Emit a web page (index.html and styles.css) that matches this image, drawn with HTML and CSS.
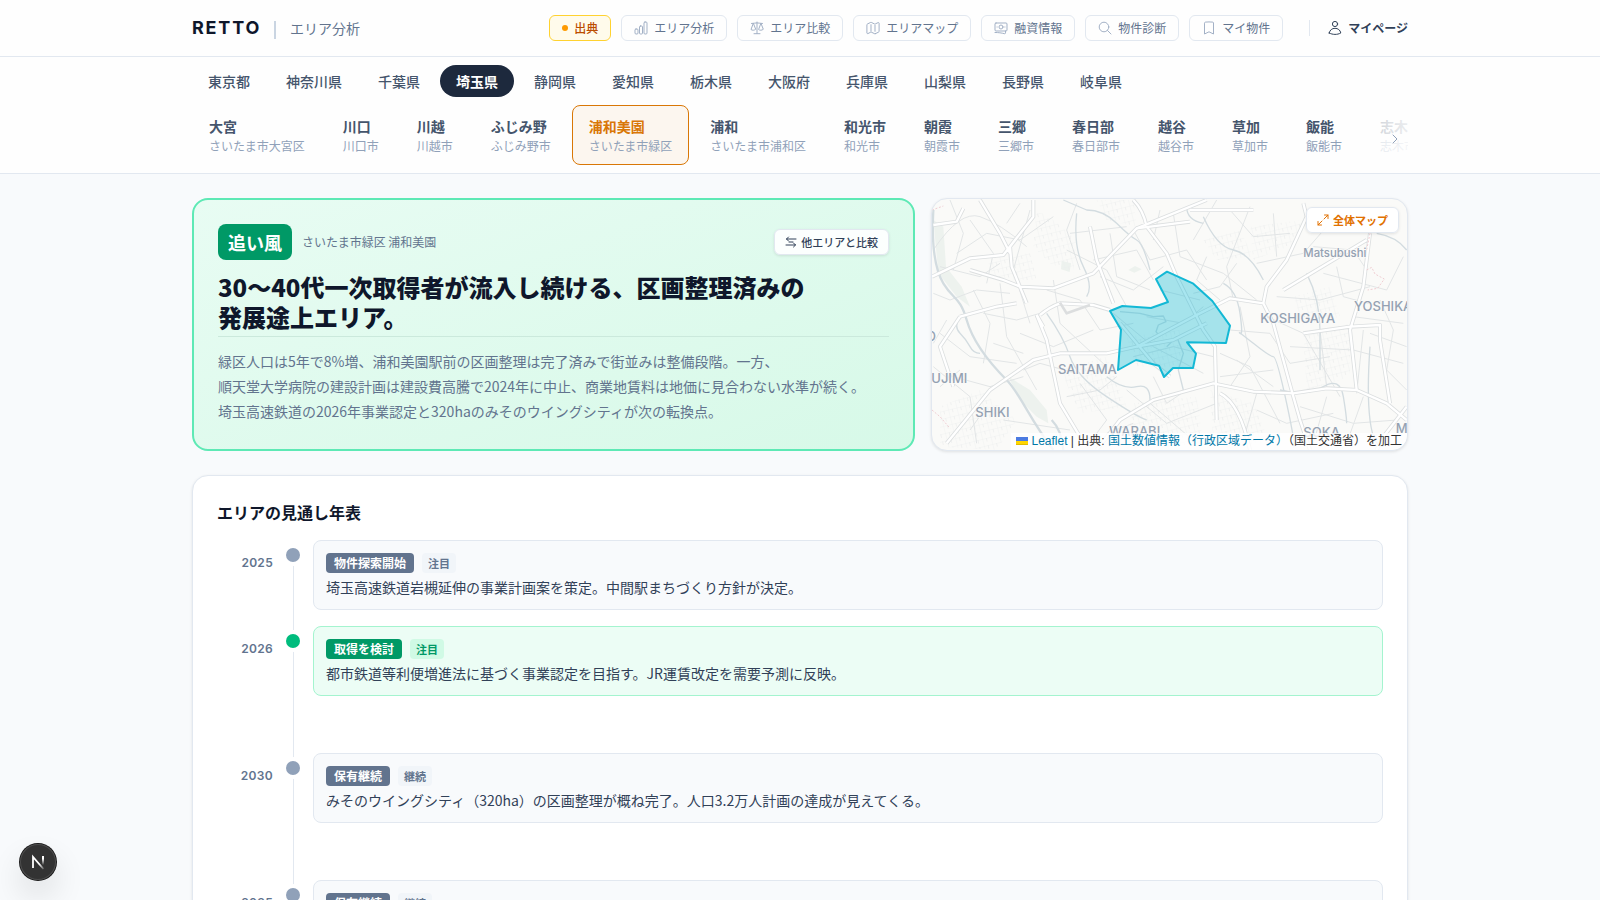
FILE: index.html
```html
<!DOCTYPE html>
<html lang="ja">
<head>
    <meta charset="UTF-8">
    <meta name="viewport" content="width=device-width, initial-scale=1.0">
    <title>RETTO エリア分析</title>
    <link rel="stylesheet" href="styles.css">
</head>
<body>
    <header class="site-header">
        <div class="container header-inner">
            <a href="#" class="logo">RETTO</a>
            <span class="logo-divider"></span>
            <span class="page-name">エリア分析</span>

            <nav class="main-nav">
                <button type="button" class="chip chip-source"><span class="source-dot"></span>出典</button>
                <a href="#" class="chip">
                    <svg class="icon" viewBox="0 0 14 14"><rect x="1" y="8" width="3" height="5" rx="1"/><rect x="5.500" y="5" width="3" height="8" rx="1"/><rect x="10" y="1" width="3" height="12" rx="1"/></svg>
                    エリア分析
                </a>
                <a href="#" class="chip">
                    <svg class="icon" viewBox="0 0 14 14"><path d="M7 1v11.500M4 12.700h6M1.500 2.500c2 0 3.500-.6 5.500-.6s3.500.6 5.500.6M3.200 2.600 1 8.500c1.300 1 3.100 1 4.400 0zM10.800 2.600 8.600 8.500c1.300 1 3.100 1 4.400 0z"/></svg>
                    エリア比較
                </a>
                <a href="#" class="chip">
                    <svg class="icon" viewBox="0 0 14 14"><path d="M5 3.700v6.500M9 4.300v6M9.300 12.700l3.300-1.600c.3-.2.500-.4.500-.7V2.200c0-.5-.6-.8-1-.6L9.200 3c-.2.100-.4.100-.6 0L5.300 1.400c-.2-.1-.4-.1-.6 0L1.400 3c-.3.200-.5.400-.5.700V12c0 .5.600.8 1 .6l2.800-1.400c.2-.1.400-.1.600 0l3.400 1.500c.2.100.4.100.6 0z"/></svg>
                    エリアマップ
                </a>
                <a href="#" class="chip">
                    <svg class="icon" viewBox="0 0 14 14"><rect x="1" y="2" width="12" height="8" rx="1"/><circle cx="7" cy="6" r="2"/><path d="M1 11.500c3.500 0 6.500.4 9.500 1.200.6.100 1-.2 1-.8V10M3 6h.2M10.800 6h.2"/></svg>
                    融資情報
                </a>
                <a href="#" class="chip">
                    <svg class="icon" viewBox="0 0 14 14"><circle cx="6" cy="6" r="4.800"/><path d="m9.500 9.500 3.500 3.500"/></svg>
                    物件診断
                </a>
                <a href="#" class="chip">
                    <svg class="icon" viewBox="0 0 14 14"><path d="M11.500 2.200V13L7 10.800 2.500 13V2.200c0-.6.400-1 1-1.100a32 32 0 0 1 7 0c.6.100 1 .5 1 1.100z"/></svg>
                    マイ物件
                </a>
            </nav>

            <a href="#" class="my-page">
                <svg class="icon" viewBox="0 0 14 14"><circle cx="7" cy="3" r="2.600"/><path d="M1.200 12c.6-3 2.900-4.700 5.800-4.700s5.200 1.700 5.800 4.700c-3.600 1.900-8 1.900-11.600 0z"/></svg>
                マイページ
            </a>
        </div>
    </header>

    <!-- Prefecture and area pickers -->
    <section class="area-nav">
        <div class="container">
            <div class="pref-row">
                <button type="button" class="pref">東京都</button>
                <button type="button" class="pref">神奈川県</button>
                <button type="button" class="pref">千葉県</button>
                <button type="button" class="pref pref-active">埼玉県</button>
                <button type="button" class="pref">静岡県</button>
                <button type="button" class="pref">愛知県</button>
                <button type="button" class="pref">栃木県</button>
                <button type="button" class="pref">大阪府</button>
                <button type="button" class="pref">兵庫県</button>
                <button type="button" class="pref">山梨県</button>
                <button type="button" class="pref">長野県</button>
                <button type="button" class="pref">岐阜県</button>
            </div>
            <div class="area-scroll">
                <div class="area-row">
                    <a href="#" class="area"><b>大宮</b><span>さいたま市大宮区</span></a>
                    <a href="#" class="area"><b>川口</b><span>川口市</span></a>
                    <a href="#" class="area"><b>川越</b><span>川越市</span></a>
                    <a href="#" class="area"><b>ふじみ野</b><span>ふじみ野市</span></a>
                    <a href="#" class="area area-active"><b>浦和美園</b><span>さいたま市緑区</span></a>
                    <a href="#" class="area"><b>浦和</b><span>さいたま市浦和区</span></a>
                    <a href="#" class="area"><b>和光市</b><span>和光市</span></a>
                    <a href="#" class="area"><b>朝霞</b><span>朝霞市</span></a>
                    <a href="#" class="area"><b>三郷</b><span>三郷市</span></a>
                    <a href="#" class="area"><b>春日部</b><span>春日部市</span></a>
                    <a href="#" class="area"><b>越谷</b><span>越谷市</span></a>
                    <a href="#" class="area"><b>草加</b><span>草加市</span></a>
                    <a href="#" class="area"><b>飯能</b><span>飯能市</span></a>
                    <a href="#" class="area"><b>志木</b><span>志木市</span></a>
                </div>
                <button type="button" class="scroll-next" aria-label="次へ">
                    <svg class="icon" viewBox="0 0 14 14"><path d="m5 3 4 4-4 4"/></svg>
                </button>
            </div>
        </div>
    </section>

    <main class="container main">
        <div class="overview">
            <!-- Summary -->
            <section class="summary">
                <div class="summary-top">
                    <span class="verdict">追い風</span>
                    <span class="summary-place">さいたま市緑区 浦和美園</span>
                    <button type="button" class="small-btn compare-btn">
                        <svg class="icon" viewBox="0 0 12 12"><path d="M11 3H1.500M3.500 1l-2 2 2 2M1 9h9.500M8.500 7l2 2-2 2M4 6h4"/></svg>
                        他エリアと比較
                    </button>
                </div>
                <h1>30〜40代一次取得者が流入し続ける、区画整理済みの<br>発展途上エリア。</h1>
                <p class="summary-text">緑区人口は5年で8%増、浦和美園駅前の区画整理は完了済みで街並みは整備段階。一方、<br>順天堂大学病院の建設計画は建設費高騰で2024年に中止、商業地賃料は地価に見合わない水準が続く。<br>埼玉高速鉄道の2026年事業認定と320haのみそのウイングシティが次の転換点。</p>
            </section>

            <!-- Map -->
            <section class="map">
                <svg class="map-canvas" viewBox="36 27 1425 753" preserveAspectRatio="xMidYMid slice">
                    <defs>
                        <pattern id="blocks" width="26" height="22" patternUnits="userSpaceOnUse" patternTransform="rotate(-14)">
                            <path d="M0 0H26M0 0V22M13 0V11" class="block-line"/>
                        </pattern>
                    </defs>

                    <path class="park" d="M40 90 70 110 78 230 125 290 150 350 110 320 55 250zM265 560 330 600 380 660 385 700 350 680 300 630zM425 212l28 8-4 26-26-8zM625 240l20-12 20 10-22 10z"/>

                    <g fill="url(#blocks)">
                        <path d="M350 60 400 90 470 150 460 250 390 220 340 170zM850 150 960 120 1000 200 890 210zM990 110 1150 90 1130 160 1000 210zM1150 430 1290 400 1290 560 1160 600zM640 640 830 620 850 760 620 780zM1120 320 1230 290 1260 380 1150 410z"/>
                        <path d="M60 650 180 600 290 690 230 780 60 770zM420 540 560 500 620 650 480 670zM620 440 780 420 790 530 650 530zM870 600 1000 640 1050 760 880 770zM530 30 640 30 650 110 560 90zM200 200 330 190 350 270 220 270z"/>
                    </g>

                    <!-- local streets -->
                    <g class="street">
                        <path d="M40 180Q120 60 180 80T320 170M90 30 130 130 100 240M160 300 210 400 190 520M60 430 150 500 290 520M40 530 150 620 170 760M240 280 260 440 350 600M330 60 280 240 330 400M400 270 420 400 560 530M450 130 620 110M440 180 560 240 620 350"/>
                        <path d="M520 210 650 180 700 270M640 120 690 210 800 180 860 270M760 70 780 200 910 250 1010 330M890 30 820 150M990 50 920 230 940 330M1010 220 1150 190 1220 110M1210 250 1400 300 1450 200M1070 320 1200 330 1350 290M1040 380 1150 430 1260 620"/>
                        <path d="M580 370 700 470 850 550M620 600 740 700 890 640M480 580 560 690 500 770M690 640 830 760M900 490 990 530 1080 700M960 350 990 500 930 590M1110 470 1300 480 1450 520M1140 650 1300 700 1430 690M1010 610 970 750M1220 620 1180 760M250 690 450 720M1300 380 1450 400M1350 430 1460 470"/>
                        <path d="M110 190 200 130 300 150 400 80M40 310 90 330 170 300 270 310M190 370 290 390 360 370M100 560 210 590 310 560M260 100 300 40M470 40 440 120 480 240M570 130 590 260 690 300M820 310 900 290 950 220M1060 70 1070 200M1200 420 1220 590M1330 420 1310 610M700 560 740 640 800 600"/>
                        <path d="M60 230 180 260 240 220M150 90 220 190 200 280M380 300 480 330 540 420 640 400M300 430 400 470 520 420M310 540 360 520 470 550M440 620 540 600 590 560M540 260 640 300 730 230M720 60 700 150M860 200 830 270 900 330M930 60 1000 140 1110 130M1180 170 1300 180 1340 240M1250 230 1270 320 1380 350M930 420 1050 430 1110 520 1230 500M950 510 1060 590M900 560 1060 540M1380 330 1420 420 1400 540 1460 600M1010 660 1100 700 1240 670M1330 620 1280 760M560 730 640 700M200 650 150 720M80 390 40 460M220 460 310 490M640 500 760 470 880 500M680 380 790 400 850 350M720 300 840 330M60 590 120 540"/>
                    </g>

                    <!-- rivers -->
                    <g class="river">
                        <path class="river-wide" d="M40 60C35 150 40 230 70 280S120 320 140 390 220 530 260 570 330 690 400 780M395 690Q425 720 430 780"/>
                        <path d="M470 70Q460 170 490 230T500 320M380 370Q430 440 450 500T560 620 680 690M430 30 500 60Q550 60 590 100T650 150 690 240M910 280Q950 300 960 370T960 430 1000 460 1060 500 1100 640 1120 770M850 80Q890 170 940 180T1030 270M800 50Q800 90 850 100M1160 250Q1200 330 1200 420T1200 540M1350 470Q1340 610 1350 690T1390 770"/>
                        <path d="M600 365 660 370 700 380 730 378 738 395 715 405 708 425 720 440M740 470 770 440 790 490 775 540 790 600M1370 130Q1430 140 1460 180M120 380q-20 30 0 50t30 40 30 20M1080 600Q1160 620 1210 590T1270 620 1280 700M560 560Q610 600 650 590T690 630"/>
                    </g>

                    <!-- main roads: casing, then the white surface -->
                    <g class="road-casing">
                        <path id="roads-a" d="M640 30Q670 60 680 110L740 190 770 260 850 420 885 470 890 690M340 30V80L270 170 275 230 320 340M36 260 150 205 250 195 340 80M150 240 250 270 300 290 400 295 520 250 650 115 860 30M180 30 240 130 270 190M120 380 230 350 290 340M350 375 380 450 420 640 480 740"/>
                        <path id="roads-b" d="M530 780 600 690 700 630 880 580 1000 605 1120 610 1220 595 1310 600 1400 640 1460 690M360 375Q390 350 420 340L520 345 570 360M350 375 370 410M1150 40 1160 80 1100 210 1040 290 1030 340 1060 400 1120 620 1140 690 1170 780M1030 340 930 325 820 380 650 470 560 490 420 490 340 510 210 600 80 760"/>
                        <path id="roads-c" d="M650 115 810 95M1150 430 1290 410 1380 405 1380 450 1410 640M1350 130 1330 290 1290 420 1310 600M1090 300 1190 240 1340 150M1460 650 1390 740 1370 780M900 610Q960 640 990 780M120 380 60 470 100 590M40 105 110 95 130 55M510 110 530 210 580 340M810 60 1000 60M600 400 700 520 750 560M650 470 760 450 860 400"/>
                    </g>
                    <g class="road">
                        <use href="#roads-a"/>
                        <use href="#roads-b"/>
                        <use href="#roads-c"/>
                    </g>
                    <path class="rail" d="M420 338 440 370 510 345"/>
                    <path class="boundary" d="M36 60 70 48M36 660 60 680 90 715M1340 240l15-8 10 20 28 15-20 28-30 5M1350 130l-10 50"/>

                    <path class="ward" d="M741 245 820 281 877 333 930 407 918 459 801 457 828 491 819 534 759 534 732 561 717 527 648 510 594 540 603 419 570 363 607 348 693 354 744 336 708 267z"/>

                    <g class="place">
                        <text class="town" x="1150" y="202">Matsubushi</text>
                        <text x="1302" y="364">YOSHIKAWA</text>
                        <text x="1021" y="398">KOSHIGAYA</text>
                        <text x="414" y="552">SAITAMA</text>
                        <text x="142" y="578" text-anchor="end">FUJIMI</text>
                        <text x="166" y="682">SHIKI</text>
                        <text x="567" y="738">WARABI</text>
                        <text x="1150" y="740">SOKA</text>
                        <text x="1427" y="728">MISATO</text>
                        <text x="48" y="454" text-anchor="end">O</text>
                    </g>
                </svg>
                <a href="#" class="small-btn map-btn">
                    <svg class="icon" viewBox="0 0 12 12"><path d="M7.500 1H11v3.500M11 1 7 5M4.500 11H1V7.500M1 11l4-4"/></svg>
                    全体マップ
                </a>
                <div class="map-credit">
                    <svg class="flag" viewBox="0 0 12 8"><path fill="#4c7be1" d="M0 0h12v4H0z"/><path fill="#ffd500" d="M0 4h12v3H0z"/><path fill="#e0bc00" d="M0 7h12v1H0z"/></svg>
                    <a href="#">Leaflet</a> | 出典: <a href="#">国土数値情報（行政区域データ）</a>（国土交通省）を加工
                </div>
            </section>
        </div>

        <!-- Timeline -->
        <section class="outlook">
            <h2>エリアの見通し年表</h2>
            <ol class="timeline">
                <li class="entry">
                    <time class="year">2025</time>
                    <span class="rail-dot"></span>
                    <div class="entry-card">
                        <div class="entry-tags"><span class="action">物件探索開始</span><span class="tag">注目</span></div>
                        <p>埼玉高速鉄道岩槻延伸の事業計画案を策定。中間駅まちづくり方針が決定。</p>
                    </div>
                </li>
                <li class="entry entry-buy entry-long">
                    <time class="year">2026</time>
                    <span class="rail-dot"></span>
                    <div class="entry-card">
                        <div class="entry-tags"><span class="action">取得を検討</span><span class="tag">注目</span></div>
                        <p>都市鉄道等利便増進法に基づく事業認定を目指す。JR運賃改定を需要予測に反映。</p>
                    </div>
                </li>
                <li class="entry entry-long">
                    <time class="year">2030</time>
                    <span class="rail-dot"></span>
                    <div class="entry-card">
                        <div class="entry-tags"><span class="action">保有継続</span><span class="tag">継続</span></div>
                        <p>みそのウイングシティ（320ha）の区画整理が概ね完了。人口3.2万人計画の達成が見えてくる。</p>
                    </div>
                </li>
                <li class="entry">
                    <time class="year">2035</time>
                    <span class="rail-dot"></span>
                    <div class="entry-card">
                        <div class="entry-tags"><span class="action">保有継続</span><span class="tag">継続</span></div>
                    </div>
                </li>
            </ol>
        </section>
    </main>

    <button type="button" class="dev-badge" aria-label="Dev Tools">
        <svg viewBox="0 0 36 36">
            <defs>
                <linearGradient id="n-fade" x1="0" y1="0" x2="0" y2="1"><stop offset="0.300" stop-color="#fff"/><stop offset="1" stop-color="#fff" stop-opacity="0"/></linearGradient>
                <linearGradient id="n-diag" x1="0" y1="0" x2="1" y2="1"><stop offset="0.600" stop-color="#fff"/><stop offset="1" stop-color="#fff" stop-opacity="0.200"/></linearGradient>
            </defs>
            <path d="M13 24V13L23.500 25" fill="none" stroke="url(#n-diag)" stroke-width="1.800"/>
            <rect x="22" y="12" width="2" height="9" fill="url(#n-fade)"/>
        </svg>
    </button>
</body>
</html>
```
FILE: styles.css
```css
* {
    margin: 0;
    padding: 0;
    box-sizing: border-box;
}

body {
    font-family: "Noto Sans CJK JP", sans-serif;
    font-size: 14px;
    line-height: 20px;
    background-color: #f8fafc;
    color: #0f172b;
}

a {
    color: inherit;
    text-decoration: none;
}

button {
    font: inherit;
    color: inherit;
    background: none;
    border: none;
    cursor: pointer;
}

.container {
    max-width: 1280px;
    margin: 0 auto;
    padding: 0 32px;
}

.icon {
    width: 14px;
    height: 14px;
    flex-shrink: 0;
    fill: none;
    stroke: currentColor;
    stroke-linecap: round;
    stroke-linejoin: round;
}

/* Header */
.site-header {
    background-color: #fefefe;
    border-bottom: 1px solid #e2e8f0;
}

.header-inner {
    display: flex;
    align-items: center;
    height: 56px;
}

.logo {
    font-family: Inter, sans-serif;
    font-size: 18px;
    font-weight: 700;
    letter-spacing: 0.1em;
}

.logo-divider {
    width: 2px;
    height: 18px;
    margin: 4px 14px 0 13px;
    background-color: #cad5e2;
}

.page-name {
    color: #62748e;
}

.main-nav {
    display: flex;
    gap: 10px;
    margin-left: auto;
}

.chip {
    display: flex;
    align-items: center;
    gap: 6px;
    height: 26px;
    padding: 0 12px;
    border: 1px solid #e2e8f0;
    border-radius: 6px;
    font-size: 12px;
    color: #62748e;
    white-space: nowrap;
}

.chip .icon {
    color: #a3b1c6;
}

.chip-source {
    background-color: #fffbeb;
    border-color: #ffd230;
    color: #bb4d00;
    font-weight: 500;
}

.source-dot {
    width: 6px;
    height: 6px;
    border-radius: 50%;
    background-color: #fe9a00;
}

.my-page {
    display: flex;
    align-items: center;
    gap: 6px;
    margin-left: 26px;
    font-size: 12px;
    font-weight: 700;
    color: #314158;
    white-space: nowrap;
}

.my-page::before {
    content: "";
    width: 1px;
    height: 16px;
    margin-right: 12px;
    background-color: #e2e8f0;
}

/* Area picker */
.area-nav {
    padding: 8px 0;
    background-color: #fefefe;
    border-bottom: 1px solid #e2e8f0;
}

.pref-row {
    display: flex;
    gap: 4px;
    margin-bottom: 8px;
}

.pref {
    height: 32px;
    padding: 0 16px;
    border-radius: 16px;
    font-weight: 500;
    color: #45556c;
    white-space: nowrap;
}

.pref-active {
    background-color: #1d293d;
    color: #fff;
    font-weight: 700;
}

.area-scroll {
    position: relative;
    overflow: hidden;
}

.area-row {
    display: flex;
    gap: 4px;
}

.area {
    flex-shrink: 0;
    height: 60px;
    padding: 10px 16px;
    border: 1px solid transparent;
    border-radius: 8px;
}

.area b {
    display: block;
    font-weight: 700;
    color: #45556c;
}

.area span {
    display: block;
    margin-top: 2px;
    font-size: 12px;
    line-height: 16px;
    color: #90a1b9;
}

.area-active {
    background-color: #fcf6ef;
    border-color: #d97706;
}

.area-active b {
    color: #d97706;
}

.scroll-next {
    position: absolute;
    top: 0;
    right: 0;
    bottom: 0;
    display: flex;
    align-items: center;
    justify-content: flex-end;
    width: 44px;
    padding: 8px 6px 0 0;
    background: linear-gradient(to right, rgba(254, 254, 254, 0.7), rgba(254, 254, 254, 0.9));
    color: #90a1b9;
}

/* Overview */
.main {
    padding-top: 24px;
    padding-bottom: 24px;
}

.overview {
    display: grid;
    grid-template-columns: minmax(0, 1fr) 477px;
    gap: 16px;
    min-height: 253px;
    margin-bottom: 24px;
}

.summary {
    padding: 24px;
    border: 2px solid #5ee9b5;
    border-radius: 16px;
    background: linear-gradient(160deg, #e8fcf3, #d7f9e8);
}

.summary-top {
    display: flex;
    align-items: center;
    gap: 10px;
    margin-bottom: 12px;
}

.verdict {
    padding: 0 10px;
    border-radius: 8px;
    background-color: #009966;
    color: #fff;
    font-size: 18px;
    font-weight: 700;
    line-height: 36px;
}

.summary-place {
    font-size: 12px;
    color: #62748e;
}

.small-btn {
    display: flex;
    align-items: center;
    gap: 4px;
    height: 26px;
    padding: 0 10px;
    border: 1px solid #e2e8f0;
    border-radius: 6px;
    background-color: rgba(255, 255, 255, 0.9);
    box-shadow: 0 1px 3px rgba(0, 0, 0, 0.1);
    font-size: 11px;
    white-space: nowrap;
}

.small-btn .icon {
    width: 12px;
    height: 12px;
}

.compare-btn {
    margin-left: auto;
    color: #314158;
    font-weight: 500;
}

h1 {
    padding-bottom: 4px;
    border-bottom: 1px solid #cbe9dc;
    font-size: 24px;
    font-weight: 800;
    line-height: 30px;
}

.summary-text {
    padding-top: 12px;
    line-height: 25px;
    color: #62748e;
}

/* Map */
.map {
    position: relative;
    border: 1px solid #e2e8f0;
    border-radius: 16px;
    background-color: #fafaf8;
    box-shadow: 0 1px 3px rgba(0, 0, 0, 0.1);
    overflow: hidden;
}

.map-canvas {
    position: absolute;
    width: 100%;
    height: 100%;
}

.map-canvas path {
    fill: none;
    stroke-linejoin: round;
}

.map-canvas .park {
    fill: #edf2ee;
}

.map-canvas g[fill] path {
    fill: url(#blocks);
}

.map-canvas .block-line {
    stroke: #ebeced;
    stroke-width: 2;
}

.street {
    stroke: #e2e5e6;
    stroke-width: 3;
}

.river {
    stroke: #d3dce0;
    stroke-width: 4;
}

.river-wide {
    stroke-width: 7;
}

.road-casing {
    stroke: #dcdfe0;
    stroke-width: 12;
}

.road {
    stroke: #fff;
    stroke-width: 7;
}

.rail {
    stroke: #dcdedf;
    stroke-width: 8;
}

.boundary {
    stroke: #efcdd2;
    stroke-width: 3;
    stroke-dasharray: 6 5;
}

.map-canvas .ward {
    fill: rgba(6, 182, 212, 0.35);
    stroke: #13b8d5;
    stroke-width: 6;
}

.place {
    fill: #94a1b2;
    stroke: #fafaf8;
    stroke-width: 4;
    paint-order: stroke;
    font-family: Inter, sans-serif;
    font-size: 39px;
    font-weight: 500;
}

.town {
    font-size: 34px;
}

.map-btn {
    position: absolute;
    top: 8px;
    right: 8px;
    color: #e17100;
    font-weight: 700;
}

.map-credit {
    position: absolute;
    right: 0;
    bottom: 0;
    padding: 0 5px;
    background-color: rgba(255, 255, 255, 0.8);
    font-family: "Liberation Sans", "Noto Sans CJK JP", sans-serif;
    font-size: 12px;
    line-height: 17px;
    color: #333;
    white-space: nowrap;
}

.map-credit a {
    color: #0078a8;
}

.flag {
    width: 12px;
    height: 8px;
}

/* Timeline */
.outlook {
    padding: 24px;
    border: 1px solid #e2e8f0;
    border-radius: 16px;
    background-color: #fff;
    box-shadow: 0 1px 3px rgba(0, 0, 0, 0.1);
}

h2 {
    margin-bottom: 16px;
    font-size: 16px;
    font-weight: 700;
    line-height: 24px;
}

.timeline {
    list-style: none;
}

.entry {
    display: grid;
    grid-template-columns: 56px 20px minmax(0, 1fr);
    column-gap: 10px;
    padding-bottom: 16px;
    position: relative;
}

.entry-long {
    padding-bottom: 57px;
}

/* vertical line behind the dots */
.entry::before {
    content: "";
    position: absolute;
    top: 8px;
    bottom: -8px;
    left: 76px;
    width: 1px;
    background-color: #e2e8f0;
}

.year {
    padding-top: 13px;
    font-family: Inter, sans-serif;
    font-size: 12px;
    font-weight: 600;
    letter-spacing: 0.025em;
    text-align: right;
    color: #62748e;
}

.rail-dot {
    position: relative;
    justify-self: center;
    width: 14px;
    height: 14px;
    margin-top: 8px;
    border-radius: 50%;
    background-color: #90a1b9;
    box-shadow: 0 0 0 4px #fff;
}

.entry-card {
    min-height: 70px;
    padding: 12px;
    border: 1px solid #e2e8f0;
    border-radius: 8px;
    background-color: #f8fafc;
}

.entry-tags {
    display: flex;
    gap: 8px;
    margin-bottom: 4px;
}

.action {
    padding: 0 8px;
    border-radius: 4px;
    background-color: #62748e;
    color: #fff;
    font-size: 12px;
    font-weight: 700;
}

.tag {
    padding: 0 6px;
    border-radius: 4px;
    background-color: #f1f5f9;
    color: #62748e;
    font-size: 11px;
    font-weight: 700;
}

.entry-card p {
    color: #314158;
}

.entry-buy .rail-dot {
    background-color: #00bc7d;
}

.entry-buy .entry-card {
    background-color: #ecfdf5;
    border-color: #a4f4cf;
}

.entry-buy .action {
    background-color: #009966;
}

.entry-buy .tag {
    background-color: #d0fae5;
    color: #009966;
}

/* Floating dev badge */
.dev-badge {
    position: fixed;
    left: 20px;
    bottom: 20px;
    width: 36px;
    height: 36px;
    border-radius: 50%;
    background-color: #333;
    box-shadow: inset 0 0 0 1px #4d4d4d, 0 0 0 1px #171717, 0 16px 32px rgba(0, 0, 0, 0.12);
}
```
